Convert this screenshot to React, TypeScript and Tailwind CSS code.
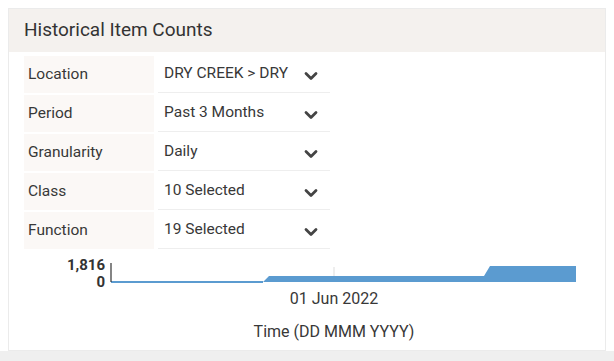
import React from "react";

const rows = [
  { label: "Location", value: "DRY CREEK > DRY" },
  { label: "Period", value: "Past 3 Months" },
  { label: "Granularity", value: "Daily" },
  { label: "Class", value: "10 Selected" },
  { label: "Function", value: "19 Selected" },
];

function Chevron() {
  return (
    <svg width="14" height="10" viewBox="0 0 14 10" className="shrink-0 mt-[3px]">
      <path d="M2 2.5 L7 7.5 L12 2.5" fill="none" stroke="#444" strokeWidth="2.8" strokeLinecap="round" strokeLinejoin="round" />
    </svg>
  );
}

export default function App() {
  return (
    <div className="w-[614px] h-[361px] bg-white relative overflow-hidden" style={{ fontFamily: "Roboto, 'Liberation Sans', sans-serif" }}>
      <div className="absolute left-0 right-0 bottom-0 h-[10px] bg-[#efefef]" />
      <div className="ml-[8px] mt-[8px] w-[598px] h-[343px] border border-[#ebebeb] bg-white flex flex-col relative">
        <div className="h-[43px] bg-[#f4f1ee] flex items-center pl-[15px] text-[19px] text-[#333]">Historical Item Counts</div>
        <div className="flex flex-col pl-[15px] pt-[4px]">
          {rows.map((r) => (
            <div key={r.label} className="flex h-[39px]">
              <div className="w-[130px] mb-[2px] bg-[#fbf8f6] flex items-center pl-[4px] text-[15.5px] text-[#383838]">{r.label}</div>
              <div className="ml-[4px] w-[172px] mb-[2px] border-b border-[#eeeeee] flex items-center pl-[6px] pr-[12px] text-[15.5px] text-[#383838]">
                <span className="flex-1">{r.value}</span>
                <Chevron />
              </div>
            </div>
          ))}
        </div>
        <div className="relative flex-1">
          <svg width="598" height="40" className="absolute left-0 top-0">
            <line x1="325" y1="16" x2="325" y2="31" stroke="#ddd" strokeWidth="1" />
            <path d="M102 31 L254 31 L260 25 L475 25 L481 15 L567 15 L567 31 Z" fill="#5b9bd0" />
            <line x1="102" y1="31" x2="254" y2="31" stroke="#5b9bd0" strokeWidth="2" />
            <line x1="102" y1="12" x2="102" y2="31" stroke="#333" strokeWidth="1.2" />
          </svg>
          <div className="absolute right-[500px] top-[6px] text-[15px] font-bold text-[#333] leading-[17px] text-right">
            <div>1,816</div>
            <div>0</div>
          </div>
          <div className="absolute left-[225px] w-[200px] top-[36px] text-center text-[16px] text-[#383838]">01 Jun 2022</div>
          <div className="absolute left-[225px] w-[200px] top-[69px] text-center text-[16px] text-[#383838]">Time (DD MMM YYYY)</div>
        </div>
      </div>
    </div>
  );
}
